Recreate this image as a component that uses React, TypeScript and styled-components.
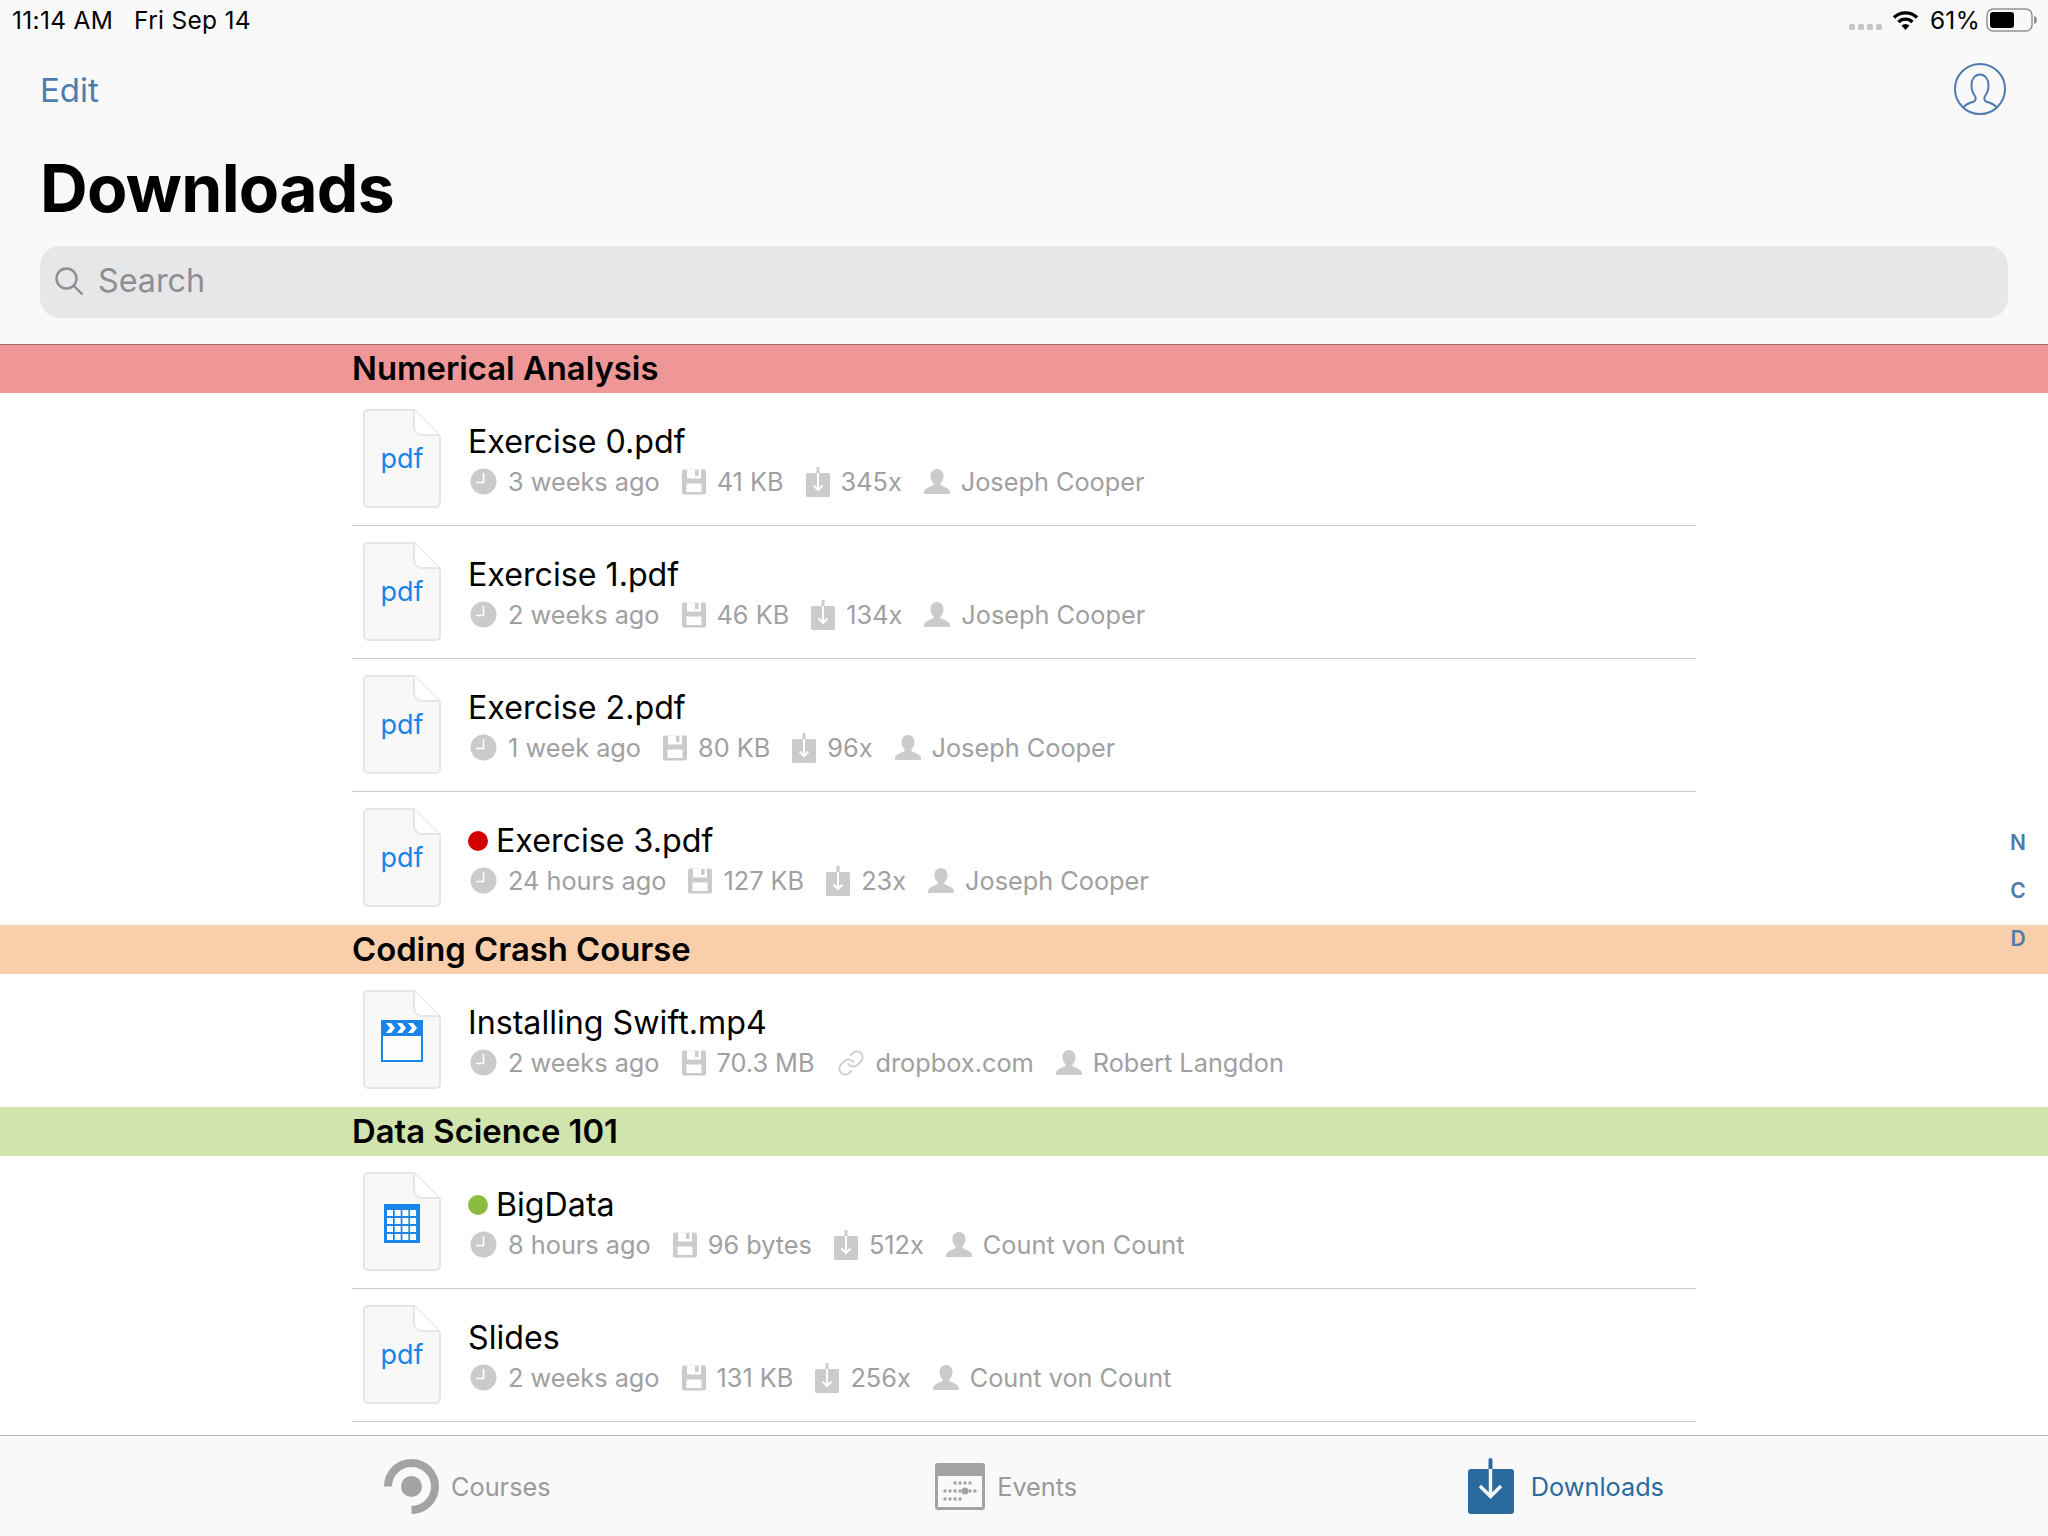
import React from 'react';
import styled, {createGlobalStyle} from 'styled-components';
import {Link} from 'lucide-react';

type FileKind = 'pdf' | 'video' | 'table';

type FileInfo = {
    name: string
    kind: FileKind
    dot?: string
    age: string
    size: string
    count?: string
    source?: string
    author: string
}

type SectionInfo = {
    title: string
    color: string
    line?: string
    files: FileInfo[]
}

const sections: SectionInfo[] = [
    {
        title: 'Numerical Analysis',
        color: '#ef9797',
        line: '#96696b',
        files: [
            {name: 'Exercise 0.pdf', kind: 'pdf', age: '3 weeks ago', size: '41 KB', count: '345x', author: 'Joseph Cooper'},
            {name: 'Exercise 1.pdf', kind: 'pdf', age: '2 weeks ago', size: '46 KB', count: '134x', author: 'Joseph Cooper'},
            {name: 'Exercise 2.pdf', kind: 'pdf', age: '1 week ago', size: '80 KB', count: '96x', author: 'Joseph Cooper'},
            {name: 'Exercise 3.pdf', kind: 'pdf', dot: '#d40000', age: '24 hours ago', size: '127 KB', count: '23x', author: 'Joseph Cooper'},
        ],
    },
    {
        title: 'Coding Crash Course',
        color: '#f9cfab',
        files: [
            {name: 'Installing Swift.mp4', kind: 'video', age: '2 weeks ago', size: '70.3 MB', source: 'dropbox.com', author: 'Robert Langdon'},
        ],
    },
    {
        title: 'Data Science 101',
        color: '#d1e4ad',
        files: [
            {name: 'BigData', kind: 'table', dot: '#8cbc3f', age: '8 hours ago', size: '96 bytes', count: '512x', author: 'Count von Count'},
            {name: 'Slides', kind: 'pdf', age: '2 weeks ago', size: '131 KB', count: '256x', author: 'Count von Count'},
        ],
    },
];

const GlobalStyle = createGlobalStyle`
  html, body {
    margin: 0;
    padding: 0;
    background: #fff;
  }
  * {
    box-sizing: border-box;
  }
`
const Page = styled.div`
  position: relative;
  display: flex;
  flex-direction: column;
  width: 2048px;
  height: 1536px;
  overflow: hidden;
  background: #fff;
  color: #000;
  font-family: Inter, "Liberation Sans", sans-serif;
`
const Top = styled.header`
  background: #f9f9f9;
  height: 344px;
  flex: none;
`
const StatusBar = styled.div`
  display: flex;
  justify-content: space-between;
  align-items: center;
  height: 40px;
  padding: 0 10px 0 12px;
  font-size: 24.5px;
  letter-spacing: 0.3px;
`
const StatusLeft = styled.div`
  display: flex;
  gap: 21px;
`
const StatusRight = styled.div`
  display: flex;
  align-items: center;
`
const SignalDots = styled.div`
  display: flex;
  gap: 3px;
  margin: 14px 10px 0 0;
`
const SignalDot = styled.span`
  width: 6px;
  height: 6px;
  border-radius: 1.5px;
  background: #c6c6c6;
`
const Percent = styled.span`
  margin: 0 6px 0 11px;
`
const NavRow = styled.div`
  display: flex;
  justify-content: space-between;
  align-items: center;
  height: 60px;
  padding: 0 42px 0 40px;
  margin-top: 20px;
`
const EditLink = styled.span`
  font-size: 33px;
  color: #4f7cae;
`
const ProfileIcon = styled.svg`
  margin-bottom: 3px;
`
const Title = styled.h1`
  margin: 32px 0 0 40px;
  font-size: 66px;
  line-height: 72px;
  font-weight: 700;
  letter-spacing: -0.7px;
`
const SearchBox = styled.div`
  display: flex;
  align-items: center;
  gap: 15px;
  height: 72px;
  margin: 22px 40px 0;
  padding: 0 15px 3px;
  border-radius: 20px;
  background: #e6e7e9;
  color: #8e8e93;
  font-size: 32.3px;
`
const List = styled.main`
  flex: 1;
  overflow: hidden;
`
const SectionBar = styled.div<{$color: string, $line?: string}>`
  display: flex;
  align-items: center;
  height: 49px;
  padding: 0 0 2px 352px;
  background: ${p => p.$color};
  border-top: 1px solid ${p => p.$line || p.$color};
  font-size: 32.8px;
  font-weight: 600;
`
const Row = styled.div<{$last: boolean}>`
  display: flex;
  align-items: center;
  gap: 27px;
  width: 1344px;
  height: 133px;
  margin-left: 352px;
  padding: 0 0 1px 11px;
  border-bottom: 1px solid ${p => p.$last ? 'transparent' : '#c8c8c8'};
`
const FileIconBox = styled.div`
  position: relative;
  display: flex;
  flex: none;
  align-items: center;
  justify-content: center;
  width: 78px;
  height: 100px;
  color: #1a84ea;
  font-size: 27px;
`
const FileShape = styled.svg`
  position: absolute;
  inset: 0;
`
const FileGlyph = styled.svg<{$drop?: number}>`
  position: relative;
  margin-top: ${p => p.$drop || 0}px;
`
const FileLabel = styled.span`
  position: relative;
`
const FileBody = styled.div`
  display: flex;
  flex-direction: column;
  gap: 6px;
`
const FileName = styled.div`
  display: flex;
  align-items: center;
  gap: 8px;
  height: 40px;
  padding-top: 4px;
  font-size: 32.2px;
`
const Dot = styled.span<{$color: string}>`
  width: 20px;
  height: 20px;
  border-radius: 50%;
  background: ${p => p.$color};
`
const Meta = styled.div`
  display: flex;
  align-items: center;
  gap: 22px;
  height: 32px;
  margin-left: 2px;
  color: #a0a0a0;
  font-size: 25.3px;
`
const MetaItem = styled.span`
  display: flex;
  align-items: center;
  gap: 11px;
`
const IndexBar = styled.div`
  position: absolute;
  top: 819px;
  right: 22px;
  display: flex;
  flex-direction: column;
  align-items: center;
  color: #4f7cae;
  font-size: 21px;
  font-weight: 600;
`
const IndexLetter = styled.span`
  height: 48px;
  line-height: 48px;
`
const TabBar = styled.nav`
  display: flex;
  flex: none;
  justify-content: space-between;
  align-items: center;
  height: 101px;
  padding: 0 384px;
  background: #f9f9f9;
  border-top: 1px solid #b8b8b8;
`
const Tab = styled.div<{$active?: boolean}>`
  display: flex;
  align-items: center;
  gap: ${p => p.$active ? 17 : 12}px;
  color: ${p => p.$active ? '#2b6a9e' : '#9a9a9a'};
  font-size: 25.3px;
  &:first-child {
    margin-right: -6px;
  }
`

const ClockIcon = () => (
    <svg width="27" height="27" viewBox="0 0 27 27">
        <circle cx="13.500" cy="13.500" r="13" fill="#cbcbcb"/>
        <path d="M13.500 5v9.500H6" fill="none" stroke="#fff" strokeWidth="1.600"/>
    </svg>
);

const FloppyIcon = () => (
    <svg width="24" height="26" viewBox="0 0 24 26">
        <rect y="0.500" width="24" height="25" rx="2" fill="#cbcbcb"/>
        <rect x="5" y="0.500" width="14" height="9" fill="#fff"/>
        <rect x="13" y="1" width="3.500" height="6" fill="#cbcbcb"/>
        <rect x="4.500" y="14.500" width="15" height="8.500" fill="#fff"/>
    </svg>
);

const SaveCountIcon = () => (
    <svg width="24" height="30" viewBox="0 0 24 30">
        <path fill="#cbcbcb" d="M1.500 6H10.500v-6h3v6h9A1.500 1.500 0 0 1 24 7.500v21a1.500 1.500 0 0 1-1.500 1.500h-21A1.500 1.500 0 0 1 0 28.500v-21A1.500 1.500 0 0 1 1.500 6z"/>
        <path d="M12 6v17M7.500 18.500l4.500 4.500 4.500-4.500" fill="none" stroke="#fff" strokeWidth="2"/>
    </svg>
);

const PersonIcon = () => (
    <svg width="26" height="26" viewBox="0 0 26 26">
        <path fill="#cbcbcb" d="M13 0c4 0 6.500 3 6.500 7 0 3-1.200 5.500-2.800 7-.6.600-.5 2 .5 2.600 3 1.400 8.300 2.900 8.800 6.400v2H0v-2c.5-3.500 5.800-5 8.800-6.400 1-.6 1.100-2 .5-2.600-1.600-1.500-2.800-4-2.800-7 0-4 2.500-7 6.500-7z"/>
    </svg>
);

const FileIcon = ({kind}: {kind: FileKind}) => (
    <FileIconBox>
        <FileShape width="78" height="100" viewBox="0 0 78 100">
            <path d="M5 1h46l26 26v67a4 4 0 0 1-4 4H5a4 4 0 0 1-4-4V5a4 4 0 0 1 4-4z" fill="#f8f8f8" stroke="#e6e6e6" strokeWidth="2"/>
            <path d="M51 1v17a8 8 0 0 0 8 8h17" fill="#fff" stroke="#e6e6e6" strokeWidth="2"/>
        </FileShape>
        {kind === 'pdf' && <FileLabel>pdf</FileLabel>}
        {kind === 'video' && (
            <FileGlyph width="42" height="42" viewBox="0 0 42 42" $drop={2}>
                <rect x="1" y="1" width="40" height="40" fill="#fdfdfd" stroke="#1a84ea" strokeWidth="2"/>
                <rect width="42" height="16" fill="#1a84ea"/>
                <path d="M5 3h5l4 5-4 5H5l4-5zM16 3h5l4 5-4 5h-5l4-5zM27 3h5l4 5-4 5h-5l4-5z" fill="#fff"/>
            </FileGlyph>
        )}
        {kind === 'table' && (
            <FileGlyph width="36" height="39" viewBox="0 0 36 39" $drop={3}>
                <rect width="36" height="39" fill="#1a84ea"/>
                {[0, 1, 2, 3].map(r => [0, 1, 2, 3].map(c => (
                    <rect key={r + '-' + c} x={3 + c * 7.7} y={6 + r * 8} width="6" height="6" fill="#fff"/>
                )))}
            </FileGlyph>
        )}
    </FileIconBox>
);

const FileRow = ({file, last}: {file: FileInfo, last: boolean}) => (
    <Row $last={last}>
        <FileIcon kind={file.kind}/>
        <FileBody>
            <FileName>
                {file.dot && <Dot $color={file.dot}/>}
                {file.name}
            </FileName>
            <Meta>
                <MetaItem><ClockIcon/>{file.age}</MetaItem>
                <MetaItem><FloppyIcon/>{file.size}</MetaItem>
                {file.count && <MetaItem><SaveCountIcon/>{file.count}</MetaItem>}
                {file.source && <MetaItem><Link size={28} color="#cbcbcb" strokeWidth={1.5}/>{file.source}</MetaItem>}
                <MetaItem><PersonIcon/>{file.author}</MetaItem>
            </Meta>
        </FileBody>
    </Row>
);

const App = () => {
    return (
        <Page>
            <GlobalStyle/>
            <Top>
                <StatusBar>
                    <StatusLeft>
                        <span>11:14 AM</span>
                        <span>Fri Sep 14</span>
                    </StatusLeft>
                    <StatusRight>
                        <SignalDots>
                            <SignalDot/><SignalDot/><SignalDot/><SignalDot/>
                        </SignalDots>
                        <svg width="27" height="22" viewBox="0 0 27 22">
                            <path d="M2 8.500a16.500 16.500 0 0 1 23 0M6.500 13a10 10 0 0 1 14 0" fill="none" stroke="#000" strokeWidth="3.400"/>
                            <path d="M9.500 16.500a6 6 0 0 1 8 0L13.500 21z" fill="#000"/>
                        </svg>
                        <Percent>61%</Percent>
                        <svg width="52" height="26" viewBox="0 0 52 26">
                            <rect x="1" y="2" width="45" height="22" rx="6" fill="none" stroke="#939393" strokeWidth="1.500"/>
                            <rect x="4" y="5" width="24" height="16" rx="3" fill="#000"/>
                            <path d="M48 9c2 .5 3 2 3 4s-1 3.500-3 4z" fill="#939393"/>
                        </svg>
                    </StatusRight>
                </StatusBar>
                <NavRow>
                    <EditLink>Edit</EditLink>
                    <ProfileIcon width="52" height="52" viewBox="0 0 52 52" fill="none" stroke="#4f7cae" strokeWidth="2">
                        <circle cx="26" cy="26" r="25"/>
                        <path d="M9 45c2-4 7-5 11-6.500 2-1 2-4 1-5.500-2-2.500-3.500-6-3.500-11 0-6 3.500-10.500 8.500-10.500s8.500 4.500 8.500 10.500c0 5-1.500 8.500-3.500 11-1 1.500-1 4.500 1 5.500 4 1.500 9 2.500 11 6.500"/>
                    </ProfileIcon>
                </NavRow>
                <Title>Downloads</Title>
                <SearchBox>
                    <svg width="28" height="28" viewBox="0 0 28 28" fill="none" stroke="#8e8e93" strokeWidth="2.400">
                        <circle cx="11.500" cy="11.500" r="10"/>
                        <path d="M18.500 18.500l9 9"/>
                    </svg>
                    Search
                </SearchBox>
            </Top>
            <List>
                {sections.map(section => (
                    <section key={section.title}>
                        <SectionBar $color={section.color} $line={section.line}>{section.title}</SectionBar>
                        {section.files.map((file, i) => (
                            <FileRow key={file.name} file={file} last={section.title !== 'Data Science 101' && i === section.files.length - 1}/>
                        ))}
                    </section>
                ))}
            </List>
            <IndexBar>
                <IndexLetter>N</IndexLetter>
                <IndexLetter>C</IndexLetter>
                <IndexLetter>D</IndexLetter>
            </IndexBar>
            <TabBar>
                <Tab>
                    <svg width="55" height="55" viewBox="0 0 55 55">
                        <path d="M4 27.500A23.500 23.500 0 1 1 27.500 51" fill="none" stroke="#a3a3a3" strokeWidth="8"/>
                        <circle cx="27.500" cy="27.500" r="10.500" fill="#a3a3a3"/>
                    </svg>
                    Courses
                </Tab>
                <Tab>
                    <svg width="50" height="47" viewBox="0 0 50 47">
                        <rect width="50" height="47" rx="3" fill="#a3a3a3"/>
                        <rect x="3" y="13" width="44" height="31" fill="#f9f9f9"/>
                        {[[0, 3, 4, 5, 6], [1, 1, 2, 3, 4, 5, 6, 7], [2, 1, 2, 3, 4]].map(line => line.slice(1).map(c => (
                            <circle key={line[0] + '-' + c} cx={c * 5 + 5} cy={20 + line[0] * 8} r={line[0] === 1 && c === 5 ? 3.500 : 1.700} fill="#a3a3a3"/>
                        )))}
                    </svg>
                    Events
                </Tab>
                <Tab $active>
                    <svg width="46" height="56" viewBox="0 0 46 56">
                        <rect y="11" width="46" height="45" rx="3" fill="#2b6a9e"/>
                        <rect x="20.500" y="0" width="4" height="12" rx="2" fill="#2b6a9e"/>
                        <path d="M22.500 11v27M12 28l10.500 10.500L33 28" fill="none" stroke="#f4f8fb" strokeWidth="3.400"/>
                    </svg>
                    Downloads
                </Tab>
            </TabBar>
        </Page>
    );
};

export default App;
